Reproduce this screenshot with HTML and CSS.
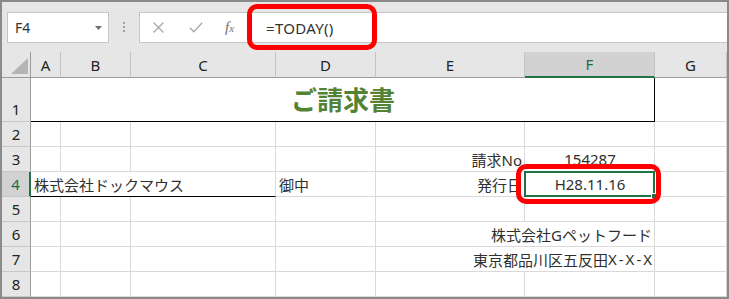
FILE: index.html
```html
<!DOCTYPE html>
<html lang="ja">
<head>
    <meta charset="UTF-8" />
    <title>ご請求書 - TODAY</title>
    <link rel="stylesheet" href="styles.css">
</head>
<body>
<div class="window">
    <div class="toolbar">
        <div class="namebox">
            <span class="ref">F4</span>
            <svg class="caret" width="7" height="4" viewBox="0 0 7 4"><polygon points="0,0 7,0 3.5,4" /></svg>
        </div>
        <div class="grip"><i></i><i></i><i></i></div>
        <div class="formula">
            <svg class="icon cancel" width="11" height="11" viewBox="0 0 11 11">
                <path d="M0.5 0.5 L10.5 10.5 M10.5 0.5 L0.5 10.5" />
            </svg>
            <svg class="icon enter" width="14" height="11" viewBox="0 0 14 11">
                <path d="M0.8 5.8 L4.8 9.8 L13.2 0.8" />
            </svg>
            <span class="icon fx">f<small>x</small></span>
            <span class="expr">=TODAY()</span>
        </div>
        <div class="callout callout-formula"></div>
    </div>

    <div class="sheet">
        <!-- column headers -->
        <div class="corner">
            <svg width="17" height="16" viewBox="0 0 17 16"><polygon points="17,0 17,16 0,16" /></svg>
        </div>
        <div class="colhead">A</div>
        <div class="colhead">B</div>
        <div class="colhead">C</div>
        <div class="colhead">D</div>
        <div class="colhead">E</div>
        <div class="colhead is-active">F</div>
        <div class="colhead">G</div>

        <!-- row 1 -->
        <div class="rowhead">1</div>
        <div class="cell title">ご請求書</div>
        <div class="cell"></div>

        <!-- row 2 -->
        <div class="rowhead">2</div>
        <div class="cell"></div><div class="cell"></div><div class="cell"></div><div class="cell"></div>
        <div class="cell"></div><div class="cell"></div><div class="cell"></div>

        <!-- row 3 -->
        <div class="rowhead">3</div>
        <div class="cell"></div><div class="cell"></div><div class="cell"></div><div class="cell"></div>
        <div class="cell right">請求No</div>
        <div class="cell center">154287</div>
        <div class="cell"></div>

        <!-- row 4 -->
        <div class="rowhead is-active">4</div>
        <div class="cell addressee">株式会社ドックマウス</div>
        <div class="cell">御中</div>
        <div class="cell right">発行日</div>
        <div class="cell center selected">
            H28.11.16
            <span class="handle"></span>
            <span class="callout callout-cell"></span>
        </div>
        <div class="cell"></div>

        <!-- row 5 -->
        <div class="rowhead">5</div>
        <div class="cell"></div><div class="cell"></div><div class="cell"></div><div class="cell"></div>
        <div class="cell"></div><div class="cell"></div><div class="cell"></div>

        <!-- row 6 -->
        <div class="rowhead">6</div>
        <div class="cell"></div><div class="cell"></div><div class="cell"></div><div class="cell"></div>
        <div class="cell right span-ef">株式会社Gペットフード</div>
        <div class="cell"></div>

        <!-- row 7 -->
        <div class="rowhead">7</div>
        <div class="cell"></div><div class="cell"></div><div class="cell"></div><div class="cell"></div>
        <div class="cell right span-ef">東京都品川区五反田<span class="lot">X-X-X</span></div>
        <div class="cell"></div>

        <!-- row 8 -->
        <div class="rowhead">8</div>
        <div class="cell"></div><div class="cell"></div><div class="cell"></div><div class="cell"></div>
        <div class="cell"></div><div class="cell"></div><div class="cell"></div>
    </div>
</div>
</body>
</html>
```

FILE: styles.css
```css
* {
    box-sizing: border-box;
    margin: 0;
    padding: 0;
}
html, body {
    background: #fff;
    font-family: "Noto Sans", "Noto Sans CJK JP", sans-serif;
    color: #303030;
}
.window {
    width: 729px;
    height: 299px;
    border: 2px solid #8a8a8a;
    background: #e6e6e6;
    display: flex;
    flex-direction: column;
    overflow: hidden;
}

/* formula bar */
.toolbar {
    position: relative;
    height: 50px;
    flex-shrink: 0;
    display: flex;
    align-items: flex-start;
    padding-top: 10px;
}
.namebox {
    margin-left: 5px;
    width: 102px;
    height: 31px;
    background: #fff;
    border: 1px solid #c6c6c6;
    display: flex;
    align-items: center;
    justify-content: space-between;
    padding: 0 6px 0 7px;
}
.namebox .ref {
    font-size: 14px;
    color: #333;
}
.caret polygon {
    fill: #6f6f6f;
}
.grip {
    margin: 10px 0 0 14px;
    width: 2px;
    height: 10px;
    display: flex;
    flex-direction: column;
    justify-content: space-between;
}
.grip i {
    display: block;
    width: 2px;
    height: 2px;
    background: #a0a0a0;
}
.formula {
    flex: 1;
    margin-left: 14px;
    height: 31px;
    background: #fff;
    border: 1px solid #c6c6c6;
    border-right: none;
    display: flex;
    align-items: center;
    padding-left: 13px;
}
.icon path {
    fill: none;
    stroke: #a8a8a8;
    stroke-width: 1.3;
}
.enter {
    margin-left: 25px;
}
.fx {
    margin-left: 22px;
    width: 13px;
    font-family: "Liberation Serif", serif;
    font-style: italic;
    font-size: 15px;
    color: #6f6f6f;
    line-height: 1;
}
.fx small {
    font-size: 11px;
}
.expr {
    margin-left: 28px;
    font-size: 15px;
    letter-spacing: 0.3px;
    color: #333;
}
.callout {
    position: absolute;
    border: 5px solid #ff0000;
    border-radius: 10px;
    pointer-events: none;
}
.callout-formula {
    left: 245px;
    top: 2px;
    width: 130px;
    height: 46px;
}

/* grid */
.sheet {
    display: grid;
    grid-template-columns: 29px 30px 70px 145px 100px 149px 130px 72px;
    grid-template-rows: 26px 44px repeat(7, 25px);
    background: #fff;
}
.corner {
    background: #e6e6e6;
    border-right: 1px solid #9b9b9b;
    border-bottom: 1px solid #9b9b9b;
    display: flex;
    justify-content: flex-end;
    align-items: flex-end;
    padding: 0 2px 3px 0;
}
.corner polygon {
    fill: #b4b4b4;
}
.colhead {
    background: #e6e6e6;
    border-right: 1px solid #c3c3c3;
    border-bottom: 1px solid #9b9b9b;
    display: flex;
    align-items: center;
    justify-content: center;
    font-size: 15px;
    color: #222;
}
.colhead.is-active {
    background: #d2d2d2;
    border-bottom: 2px solid #217346;
    color: #1e6b40;
}
.rowhead {
    background: #e6e6e6;
    border-right: 1px solid #9b9b9b;
    border-bottom: 1px solid #c8c8c8;
    display: flex;
    align-items: flex-end;
    justify-content: center;
    font-size: 15px;
    line-height: 24px;
    color: #222;
}
.rowhead.is-active {
    background: #d2d2d2;
    border-right: 2px solid #217346;
    color: #1e6b40;
}
.cell {
    border-right: 1px solid #d9d9d9;
    border-bottom: 1px solid #d9d9d9;
    display: flex;
    align-items: center;
    padding: 0 2px 0 3px;
    font-size: 15px;
    white-space: nowrap;
}
.cell.right {
    justify-content: flex-end;
}
.cell.center {
    justify-content: center;
}
.lot {
    letter-spacing: 2px;
    margin-right: -2px;
}
.title {
    grid-column: 2 / 8;
    border-right-color: #000;
    border-bottom-color: #000;
    justify-content: center;
    padding-bottom: 3px;
    font-family: "Noto Sans CJK JP", sans-serif;
    font-size: 26px;
    font-weight: bold;
    color: #548235;
}
.addressee {
    grid-column: 2 / 5;
    border-bottom-color: #000;
}
.span-ef {
    grid-column: 6 / 8;
}
.selected {
    position: relative;
}
.selected::before {
    content: "";
    position: absolute;
    left: -1px;
    top: -1px;
    right: -1px;
    bottom: -1px;
    border: 2px solid #217346;
}
.handle {
    position: absolute;
    right: -3px;
    bottom: -3px;
    width: 6px;
    height: 6px;
    background: #217346;
    border: 1px solid #fff;
}
.callout-cell {
    left: -9px;
    top: -8px;
    right: -7px;
    bottom: -8px;
}
```
